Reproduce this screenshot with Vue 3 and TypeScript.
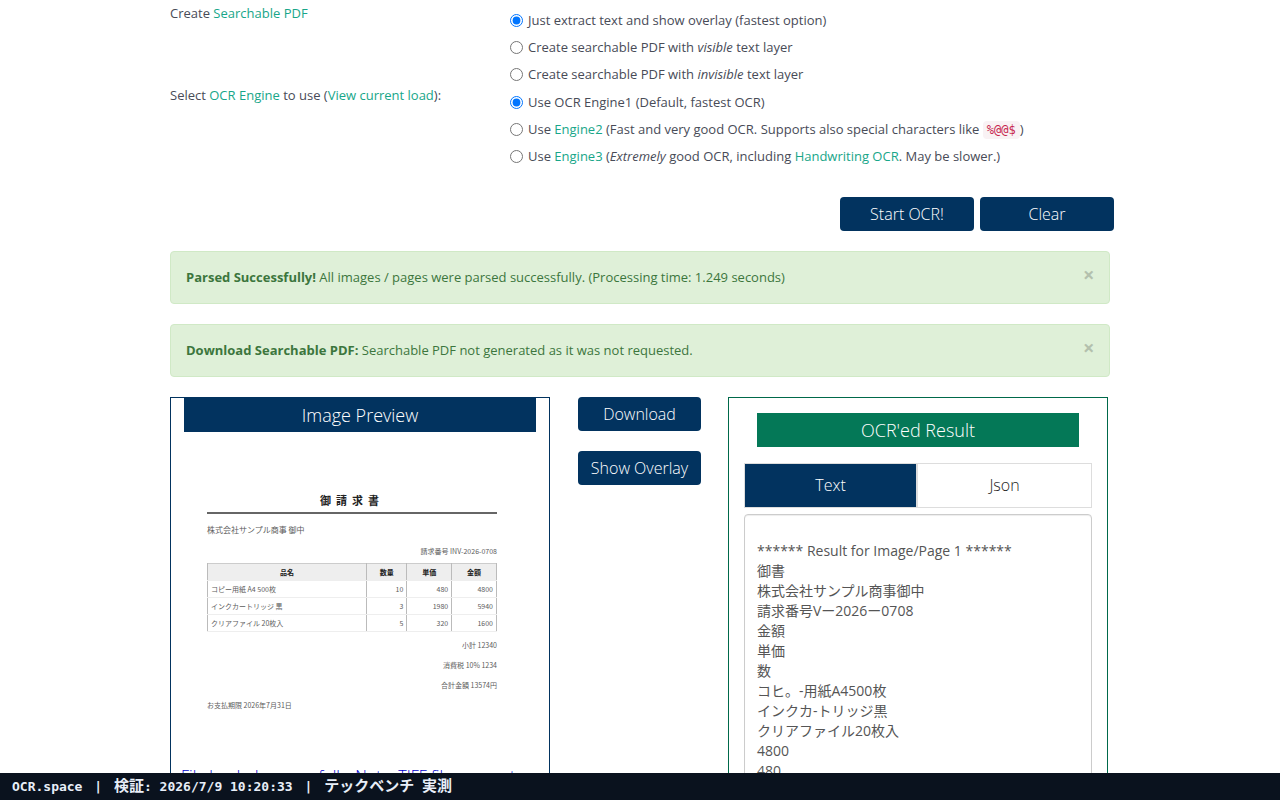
<script setup lang="ts">
import { ref } from 'vue'

interface InvoiceRow {
  name: string
  qty: number
  price: number
  total: number
}

const layer = ref('overlay')
const engine = ref('1')
const tab = ref('text')

const invoiceTitle = ['御', '請', '求', '書'].join('  ')

const rows: InvoiceRow[] = [
  { name: 'コピー用紙 A4 500枚', qty: 10, price: 480, total: 4800 },
  { name: 'インクカートリッジ 黒', qty: 3, price: 1980, total: 5940 },
  { name: 'クリアファイル 20枚入', qty: 5, price: 320, total: 1600 },
]

const result = ref(
  [
    '',
    '****** Result for Image/Page 1 ******',
    '御書',
    '株式会社サンプル商事御中',
    '請求番号Vー2026ー0708',
    '金額',
    '単価',
    '数',
    'コヒ。-用紙A4500枚',
    'インクカ-トリッジ黒',
    'クリアファイル20枚入',
    '4800',
    '480',
  ].join('\n'),
)
</script>

<template>
  <div class="page">
    <main class="viewport">
      <div class="container">
        <form class="options" @submit.prevent>
          <p class="option-title first">Create <a href="#pdf">Searchable PDF</a></p>
          <div class="choices first">
            <label><input v-model="layer" type="radio" name="layer" value="overlay" /><span>Just extract text and show overlay (fastest option)</span></label>
            <label><input v-model="layer" type="radio" name="layer" value="visible" /><span>Create searchable PDF with <i>visible</i> text layer</span></label>
            <label><input v-model="layer" type="radio" name="layer" value="invisible" /><span>Create searchable PDF with <i>invisible</i> text layer</span></label>
          </div>
          <p class="option-title">Select <a href="#engine">OCR Engine</a> to use (<a href="#load">View current load</a>):</p>
          <div class="choices">
            <label><input v-model="engine" type="radio" name="engine" value="1" /><span>Use OCR Engine1 (Default, fastest OCR)</span></label>
            <label><input v-model="engine" type="radio" name="engine" value="2" /><span>Use <a href="#engine2">Engine2</a> (Fast and very good OCR. Supports also special characters like <code>%@@$</code>)</span></label>
            <label><input v-model="engine" type="radio" name="engine" value="3" /><span>Use <a href="#engine3">Engine3</a> (<i>Extremely</i> good OCR, including <a href="#handwriting">Handwriting OCR</a>. May be slower.)</span></label>
          </div>
        </form>

        <div class="actions">
          <button class="btn" type="button">Start OCR!</button>
          <button class="btn" type="button">Clear</button>
        </div>

        <div class="alert" role="alert">
          <span><strong>Parsed Successfully!</strong> All images / pages were parsed successfully. (Processing time: 1.249 seconds)</span>
          <button class="close" type="button" aria-label="Close">×</button>
        </div>
        <div class="alert" role="alert">
          <span><strong>Download Searchable PDF:</strong> Searchable PDF not generated as it was not requested.</span>
          <button class="close" type="button" aria-label="Close">×</button>
        </div>

        <div class="panels">
          <section class="panel preview">
            <h2 class="bar">Image Preview</h2>
            <div class="invoice">
              <h3>{{ invoiceTitle }}</h3>
              <p class="client">株式会社サンプル商事 御中</p>
              <p class="number">請求番号 INV-2026-0708</p>
              <table>
                <thead>
                  <tr><th class="name">品名</th><th class="qty">数量</th><th>単価</th><th>金額</th></tr>
                </thead>
                <tbody>
                  <tr v-for="row in rows" :key="row.name">
                    <td class="name">{{ row.name }}</td>
                    <td>{{ row.qty }}</td>
                    <td>{{ row.price }}</td>
                    <td>{{ row.total }}</td>
                  </tr>
                </tbody>
              </table>
              <p class="sum">小計 12340</p>
              <p class="sum">消費税 10% 1234</p>
              <p class="sum">合計金額 13574円</p>
              <p class="due">お支払期限 2026年7月31日</p>
            </div>
            <p class="note">File loaded successfully. Note: TIFF files are not</p>
          </section>

          <div class="tools">
            <button class="btn" type="button">Download</button>
            <button class="btn" type="button">Show Overlay</button>
          </div>

          <section class="panel result">
            <h2 class="bar green">OCR'ed Result</h2>
            <div class="tabs" role="tablist">
              <button type="button" role="tab" :class="{ active: tab === 'text' }" @click="tab = 'text'">Text</button>
              <button type="button" role="tab" :class="{ active: tab === 'json' }" @click="tab = 'json'">Json</button>
            </div>
            <textarea v-model="result" aria-label="OCR result" rows="20"></textarea>
          </section>
        </div>
      </div>
    </main>
    <footer class="status">OCR.space <span class="sep">|</span> <span class="wide">検証</span>: 2026/7/9 10:20:33 <span class="sep">|</span> <span class="wide">テックベンチ</span> <span class="wide">実測</span></footer>
  </div>
</template>

<style>
body {
  margin: 0;
}
</style>

<style scoped>
* {
  box-sizing: border-box;
}

.page {
  display: flex;
  flex-direction: column;
  height: 100vh;
  overflow: hidden;
  background: #fff;
  color: #484b57;
  font: 13px/20px "Open Sans", "Noto Sans CJK JP", sans-serif;
}

.viewport {
  flex: 1;
  min-height: 0;
  overflow: hidden;
}

.container {
  max-width: 940px;
  margin: 0 auto;
}

p,
h2,
h3 {
  margin: 0;
}

a {
  color: #18a689;
  text-decoration: none;
}

.options {
  display: grid;
  grid-template-columns: 340px 1fr;
  padding-top: 3px;
}

.option-title {
  line-height: 16px;
}

.option-title.first {
  padding-top: 2px;
}

.choices {
  display: flex;
  flex-direction: column;
  padding-top: 1px;
}

.choices.first {
  padding-top: 3px;
}

.choices label {
  display: flex;
  align-items: center;
  gap: 5px;
  height: 27px;
}

.choices input {
  width: 13px;
  height: 13px;
  margin: 1px 0 0;
  accent-color: #0075ff;
}

code {
  padding: 2px 4px;
  border-radius: 4px;
  background: #f9f2f4;
  color: #c7254e;
  font: 12px "DejaVu Sans Mono", monospace;
}

.btn {
  height: 34px;
  padding: 0 12px;
  border: 0;
  border-radius: 4px;
  background: #02335f;
  color: #fff;
  font: 300 16px/22px "Open Sans", sans-serif;
}

.actions {
  display: flex;
  justify-content: flex-end;
  gap: 6px;
  margin: 28px -4px 20px 0;
}

.actions .btn {
  width: 134px;
}

.alert {
  display: flex;
  justify-content: space-between;
  align-items: flex-start;
  margin-bottom: 20px;
  padding: 15px;
  border: 1px solid #d0e9c6;
  border-radius: 4px;
  background: #dff0d8;
  color: #3c763d;
  line-height: 21px;
}

.close {
  width: 11px;
  padding: 0;
  border: 0;
  background: none;
  color: #b3c0ad;
  font: 700 20px/16px "Open Sans", sans-serif;
}

.panels {
  display: grid;
  grid-template-columns: 380px 123px 380px;
  column-gap: 28px;
  align-items: start;
}

.panels .result {
  margin-left: -1px;
  margin-right: 1px;
}

.panel {
  border: 1px solid #02335f;
}

.bar {
  height: 34px;
  background: #02335f;
  color: #fff;
  font-weight: 300;
  font-size: 18px;
  line-height: 34px;
  text-align: center;
}

.preview {
  padding: 0 13px 40px;
}

.invoice {
  margin: 60px 39px 0 23px;
  color: #5c5c5c;
  font: 7px/10px "Noto Sans CJK JP", sans-serif;
}

.invoice h3 {
  padding: 0 5px 4px 0;
  border-bottom: 2px solid #666;
  color: #222;
  font-size: 11px;
  line-height: 16px;
  text-align: center;
  white-space: pre;
}

.client {
  margin-top: 10px;
  font-size: 8px;
  line-height: 12px;
}

.number {
  margin: 10px 0 7px;
  text-align: right;
}

.invoice table {
  width: 100%;
  border: 1px solid #ccc;
  border-collapse: collapse;
  table-layout: fixed;
}

.invoice th,
.invoice td {
  height: 17px;
  padding: 0 3px;
  border-right: 1px solid #bbb;
  border-left: 1px solid #bbb;
  border-bottom: 1px solid #eee;
  line-height: 10px;
  text-align: right;
}

.invoice th {
  background: #eee;
  color: #222;
  text-align: center;
}

.invoice .name {
  width: 55%;
}

.invoice .qty {
  width: 14%;
}

.invoice td.name {
  text-align: left;
}

.sum {
  margin-top: 10px;
  text-align: right;
}

.invoice table + .sum {
  margin-top: 8px;
}

.due {
  margin-top: 10px;
}

.note {
  margin: 56px -10px 0 -3px;
  color: #0000cc;
  font-weight: 300;
  font-size: 16px;
  white-space: nowrap;
}

.tools {
  display: flex;
  flex-direction: column;
  gap: 20px;
}

.tools .btn {
  padding: 0;
}

.result {
  padding: 15px;
  border-color: #00694a;
}

.green {
  margin: 0 13px 16px;
  background: #047857;
}

.tabs {
  display: grid;
  grid-template-columns: 173px 1fr;
  margin-bottom: 6px;
  border: 1px solid #ddd;
}

.tabs button {
  height: 43px;
  padding: 0 0 1px;
  border: 0;
  border-right: 2px solid #ddd;
  background: #fff;
  color: #222;
  font: 300 16px/22px "Open Sans", sans-serif;
}

.tabs button:last-child {
  border-right: 0;
}

.tabs .active {
  background: #02335f;
  color: #fff;
}

textarea {
  display: block;
  width: 100%;
  padding: 6px 12px;
  border: 1px solid #ccc;
  border-radius: 4px;
  box-shadow: inset 0 1px 1px rgba(0, 0, 0, 0.075);
  background: #fff;
  color: #555;
  font: 14px/20px "Open Sans", "Noto Sans CJK JP", sans-serif;
  overflow: hidden;
  resize: none;
}

.status {
  padding: 4px 12px 3px;
  background: #0a121e;
  color: #e8eef8;
  font: 700 13px/20px "DejaVu Sans Mono", "Noto Sans CJK JP", monospace;
}

.sep {
  padding: 0 4px;
}

.wide {
  font-size: 15px;
  line-height: 16px;
}
</style>
